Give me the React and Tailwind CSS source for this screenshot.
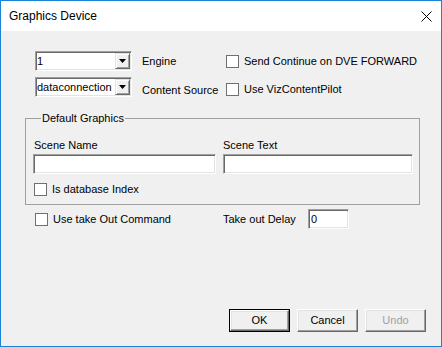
import React from "react";

const sunken =
  "border border-t-[#a0a0a0] border-l-[#a0a0a0] border-r-white border-b-white shadow-[inset_1px_1px_0_#696969,inset_-1px_-1px_0_#e3e3e3] bg-white";

const Combo = ({ value }) => (
  <div className={`w-[97px] h-[20px] flex items-center ${sunken}`}>
    <span className="flex-1 pl-[1px] leading-[16px] truncate">{value}</span>
    <div className="w-[15px] h-[16px] mr-[1px] flex items-center justify-center bg-[#f0f0f0] border border-t-[#e3e3e3] border-l-[#e3e3e3] border-r-[#696969] border-b-[#696969] shadow-[inset_1px_1px_0_#ffffff,inset_-1px_-1px_0_#a0a0a0]">
      <svg width="7" height="4" viewBox="0 0 7 4">
        <path d="M0 0h7L3.5 4z" fill="#000" />
      </svg>
    </div>
  </div>
);

const Check = ({ label }) => (
  <div className="flex items-center">
    <div className="w-[13px] h-[13px] bg-white border border-[#707070]" />
    <span className="ml-[5px] leading-[13px]">{label}</span>
  </div>
);

const Button = ({ children, primary, disabled }) => (
  <div
    className={`w-[61px] h-[23px] ${primary ? "border border-black" : ""}`}
  >
    <div
      className={`w-full h-full flex items-center justify-center bg-[#f0f0f0] border border-t-white border-l-white border-r-[#696969] border-b-[#696969] shadow-[inset_-1px_-1px_0_#a0a0a0,inset_1px_1px_0_#e3e3e3] ${
        disabled ? "text-[#a0a0a0]" : "text-black"
      }`}
    >
      {children}
    </div>
  </div>
);

export default function App() {
  return (
    <div
      className="w-[442px] h-[347px] border border-[#1883d7] bg-[#f0f0f0] flex flex-col text-[11px] text-black"
      style={{ fontFamily: '"Liberation Sans", Arial, sans-serif' }}
    >
      <div className="h-[30px] bg-white flex items-center justify-between pl-[8px] pr-[9px]">
        <span className="text-[12px]">Graphics Device</span>
        <svg width="11" height="11" viewBox="0 0 11 11">
          <path d="M0.5 0.5L10.5 10.5M10.5 0.5L0.5 10.5" stroke="#000" strokeWidth="1" />
        </svg>
      </div>

      <div className="flex-1 flex flex-col">
        <div className="mt-[20px] h-[20px] flex items-center pl-[34px]">
          <Combo value="1" />
          <span className="ml-[10px] w-[84px]">Engine</span>
          <Check label="Send Continue on DVE FORWARD" />
        </div>
        <div className="mt-[6px] h-[20px] flex items-center pl-[34px]">
          <Combo value="dataconnection" />
          <span className="ml-[10px] w-[84px] mt-[6px]">Content Source</span>
          <div className="mt-[5px]">
            <Check label="Use VizContentPilot" />
          </div>
        </div>

        <fieldset className="ml-[24px] mt-[15px] w-[395px] h-[93px] border border-[#a0a0a0] pl-[7px] pr-[5px]">
          <legend className="ml-[8px] px-[1px] leading-[13px]">Default Graphics</legend>
          <div className="flex gap-[7px] mt-[14px]">
            <div className="w-[183px]">
              <div className="pl-[1px] leading-[13px]">Scene Name</div>
              <div className={`mt-[2px] h-[20px] ${sunken}`} />
            </div>
            <div className="w-[190px]">
              <div className="leading-[13px]">Scene Text</div>
              <div className={`mt-[2px] h-[20px] ${sunken}`} />
            </div>
          </div>
          <div className="mt-[9px] ml-[1px]">
            <Check label="Is database Index" />
          </div>
        </fieldset>

        <div className="mt-[4px] h-[20px] flex items-center pl-[34px]">
          <div className="w-[188px]">
            <Check label="Use take Out Command" />
          </div>
          <span className="w-[85px]">Take out Delay</span>
          <div className={`w-[41px] h-[20px] flex items-center pl-[2px] ${sunken}`}>0</div>
        </div>

        <div className="mt-auto mb-[14px] flex justify-end gap-[7px] pr-[15px]">
          <Button primary>OK</Button>
          <Button>Cancel</Button>
          <Button disabled>Undo</Button>
        </div>
      </div>
    </div>
  );
}
